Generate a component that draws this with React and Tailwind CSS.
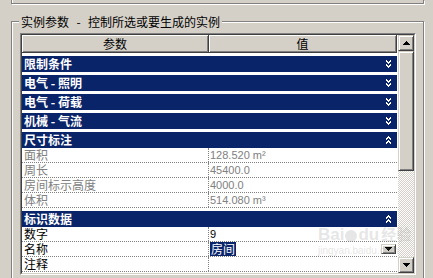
import React from 'react';

const cjk = "font-['Noto_Sans_CJK_SC','Liberation_Sans',sans-serif]";

function Chevrons({ up }) {
  // pixel-style double chevron, white
  const down = [
    [0, 0], [4, 0],
    [0, 1], [1, 1], [3, 1], [4, 1],
    [1, 2], [2, 2], [3, 2],
    [2, 3],
    [0, 4], [4, 4],
    [0, 5], [1, 5], [3, 5], [4, 5],
    [1, 6], [2, 6], [3, 6],
    [2, 7],
  ];
  const px = up ? down.map(([x, y]) => [x, 7 - y]) : down;
  return (
    <svg width="5" height="8" viewBox="0 0 5 8" shapeRendering="crispEdges">
      {px.map(([x, y], i) => (
        <rect key={i} x={x} y={y} width="1" height="1" fill="#fff" />
      ))}
    </svg>
  );
}

function Arrow({ up }) {
  return (
    <svg width="7" height="4" viewBox="0 0 7 4" shapeRendering="crispEdges">
      {up ? (
        <path d="M3 0h1v1h1v1h1v1h1v1H0V3h1V2h1V1h1z" fill="#000" />
      ) : (
        <path d="M0 0h7v1H6v1H5v1H4v1H3V3H2V2H1V1H0z" fill="#000" />
      )}
    </svg>
  );
}

const btn3d =
  "border border-t-[#d4d0c8] border-l-[#d4d0c8] border-r-[#404040] border-b-[#404040] bg-[#d4d0c8] shadow-[inset_1px_1px_0_#fff,inset_-1px_-1px_0_#808080]";

function Category({ title, open }) {
  return (
    <div className="pt-[3px] bg-white">
      <div className="h-[16px] bg-[#0a246a] flex items-center justify-between pl-[2px] pr-[6px]">
        <span className={`${cjk} text-[12px] leading-[16px] font-bold text-white`}>{title}</span>
        <Chevrons up={open} />
      </div>
    </div>
  );
}

function Row({ label, value, dim, children }) {
  const color = dim ? 'text-[#808080]' : 'text-black';
  return (
    <div className="h-[15px] flex border-b border-dotted border-[#808080] bg-white">
      <div className={`w-[187px] flex items-center border-r border-dotted border-[#808080] pl-[2px] ${cjk} text-[12px] leading-[14px] ${color}`}>
        {label}
      </div>
      <div className={`flex-1 flex items-center pl-[1px] font-['Liberation_Sans',sans-serif] text-[11px] leading-[14px] ${color}`}>
        {children || value}
      </div>
    </div>
  );
}

export default function App() {
  return (
    <div className="w-[433px] h-[278px] bg-[#d4d0c8] overflow-hidden relative">
      {/* previous group box tail */}
      <div className="ml-[11px] w-[413px] h-[4px] border-l border-r border-b border-[#808080] shadow-[inset_1px_0_0_#fff,1px_1px_0_#fff]" />

      <div className="relative ml-[11px] mt-[17px] w-[413px] h-[300px] border border-[#808080] shadow-[inset_1px_1px_0_#fff,1px_1px_0_#fff] pt-[11px] pl-[8px]">
        <div className={`absolute -top-[8px] left-[7px] px-[2px] bg-[#d4d0c8] ${cjk} text-[12px] leading-[15px] text-black`}>
          实例参数<span className="inline-block w-[19px] text-center">-</span>控制所选或要生成的实例
        </div>

        {/* sunken list */}
        <div className="w-[396px] h-[242px] border-t border-l border-t-[#808080] border-l-[#808080] border-r border-b border-r-white border-b-white">
          <div className="h-full flex border-t border-l border-t-[#404040] border-l-[#404040] border-r border-b border-r-[#d4d0c8] border-b-[#d4d0c8]">
            <div className="w-[376px] bg-white pr-[1px] flex flex-col">
              <div className={`h-[18px] flex bg-[#d4d0c8] ${cjk} text-[12px] text-black`}>
                <div className="w-[187px] flex items-center justify-center border-r border-b border-[#404040] shadow-[inset_1px_1px_0_#fff,inset_-1px_-1px_0_#808080]">
                  参数
                </div>
                <div className="flex-1 flex items-center justify-center border-r border-b border-[#404040] shadow-[inset_1px_1px_0_#fff,inset_-1px_-1px_0_#808080]">
                  值
                </div>
              </div>
              <Category title="限制条件" />
              <Category title="电气 - 照明" />
              <Category title="电气 - 荷载" />
              <Category title="机械 - 气流" />
              <Category title="尺寸标注" open />
              <Row label="面积" value="128.520 m²" dim />
              <Row label="周长" value="45400.0" dim />
              <Row label="房间标示高度" value="4000.0" dim />
              <Row label="体积" value="514.080 m³" dim />
              <Category title="标识数据" open />
              <Row label="数字" value="9" />
              <Row label="名称">
                <div className="flex-1 flex items-center justify-between pr-[1px]">
                  <span className={`${cjk} text-[12px] leading-[14px] bg-[#0a246a] text-white px-[1px]`}>房间</span>
                  <div className={`w-[15px] h-[10px] ${btn3d} flex items-center justify-center`}>
                    <Arrow />
                  </div>
                </div>
              </Row>
              <Row label="注释" value="" />
            </div>

            {/* scrollbar */}
            <div className="w-[16px] flex flex-col">
              <div className={`h-[16px] ${btn3d} flex items-center justify-center`}>
                <Arrow up />
              </div>
              <div className={`h-[120px] ${btn3d}`} />
              <div className="flex-1 bg-[repeating-conic-gradient(#ffffff_0%_25%,#d4d0c8_0%_50%)] bg-[length:2px_2px]" />
              <div className={`h-[16px] ${btn3d} flex items-center justify-center`}>
                <Arrow />
              </div>
            </div>
          </div>
        </div>
      </div>

      {/* watermark */}
      <div className="absolute left-[318px] top-[226px] opacity-25 pointer-events-none text-[#a0a0a0] leading-none">
        <div className="font-['Liberation_Sans',sans-serif] font-bold text-[17px]">
          Bai<span className="inline-block w-[12px] h-[12px] rounded-full bg-[#a0a0a0] mx-[1px] align-middle" />du
          <span className={`${cjk} text-[15px] ml-[2px]`}>经验</span>
        </div>
        <div className="font-['Liberation_Sans',sans-serif] text-[10px] mt-[3px]">jingyan.baidu.com</div>
      </div>
    </div>
  );
}
